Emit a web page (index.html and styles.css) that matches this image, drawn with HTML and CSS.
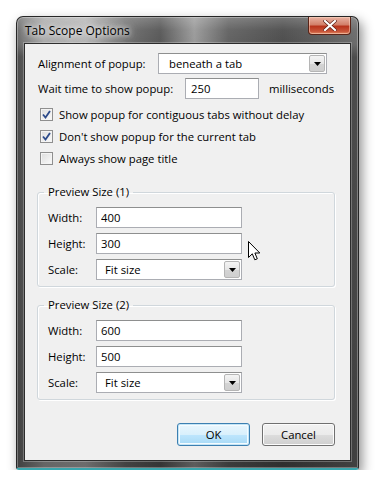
FILE: index.html
```html
<!DOCTYPE html>
<html>
<head>
    <title>Tab Scope Options</title>
    <meta charset="utf-8">
    <link rel="stylesheet" href="styles.css">
</head>
<body>
    <div class="window">
        <div class="titlebar">
            <span class="title">Tab Scope Options</span>
            <span class="close">
                <svg width="14" height="11" viewBox="0 0 14 11">
                    <path d="M2 1 L12 10 M12 1 L2 10" stroke="#5a1a10" stroke-width="3.4" stroke-linecap="square"></path>
                    <path d="M2 1 L12 10 M12 1 L2 10" stroke="#ffffff" stroke-width="2.2" stroke-linecap="square"></path>
                </svg>
            </span>
        </div>
        <div class="client">
            <div class="row">
                <label class="lbl lbl-align">Alignment of popup:</label>
                <div class="combo combo-wide">
                    <span class="combo-text">beneath a tab</span>
                    <span class="combo-btn"><svg width="7" height="4" viewBox="0 0 7 4"><path d="M0 0 H7 L3.5 4 Z" fill="#000"></path></svg></span>
                </div>
            </div>
            <div class="row">
                <label class="lbl lbl-wait">Wait time to show popup:</label>
                <input class="field field-ms" type="text" value="250" readonly>
                <span class="unit">milliseconds</span>
            </div>
            <div class="check"><span class="box"><svg width="9" height="9" viewBox="0 0 9 9"><path d="M1 4.5 L3.5 7.5 L8 1" fill="none" stroke="#2c4a8a" stroke-width="1.8"></path></svg></span>Show popup for contiguous tabs without delay</div>
            <div class="check"><span class="box"><svg width="9" height="9" viewBox="0 0 9 9"><path d="M1 4.5 L3.5 7.5 L8 1" fill="none" stroke="#2c4a8a" stroke-width="1.8"></path></svg></span>Don't show popup for the current tab</div>
            <div class="check"><span class="box"></span>Always show page title</div>

            <fieldset class="group">
                <legend>Preview Size (1)</legend>
                <div class="grow"><label class="glbl">Width:</label><input class="field" type="text" value="400" readonly></div>
                <div class="grow"><label class="glbl">Height:</label><input class="field" type="text" value="300" readonly></div>
                <div class="grow"><label class="glbl">Scale:</label>
                    <div class="combo combo-small">
                        <span class="combo-text">Fit size</span>
                        <span class="combo-btn"><svg width="7" height="4" viewBox="0 0 7 4"><path d="M0 0 H7 L3.5 4 Z" fill="#000"></path></svg></span>
                    </div>
                </div>
            </fieldset>

            <fieldset class="group group2">
                <legend>Preview Size (2)</legend>
                <div class="grow"><label class="glbl">Width:</label><input class="field" type="text" value="600" readonly></div>
                <div class="grow"><label class="glbl">Height:</label><input class="field" type="text" value="500" readonly></div>
                <div class="grow"><label class="glbl">Scale:</label>
                    <div class="combo combo-small">
                        <span class="combo-text">Fit size</span>
                        <span class="combo-btn"><svg width="7" height="4" viewBox="0 0 7 4"><path d="M0 0 H7 L3.5 4 Z" fill="#000"></path></svg></span>
                    </div>
                </div>
            </fieldset>

            <div class="buttons">
                <button class="btn btn-default">OK</button>
                <button class="btn">Cancel</button>
            </div>
        </div>
    </div>

    <svg class="cursor" width="13" height="21" viewBox="0 0 13 21">
        <path d="M0.5 0.5 L0.5 16.5 L4.3 12.8 L6.8 18.8 L9.3 17.8 L6.9 12 L11.8 12 Z" fill="#fff" stroke="#000" stroke-width="1" stroke-linejoin="miter"></path>
    </svg>
</body>
</html>
```

FILE: styles.css
```css
*{
    box-sizing: border-box;
}
body{
    margin:0;
    padding:16px 0 0 16px;
    background-color: #ffffff;
    font-family: "Open Sans", "Noto Sans", sans-serif;
    font-size: 11.3px;
    color: #000;
}
.window{
    width:343px;
    height:454px;
    padding:0 7px 8px 7px;
    border-radius: 7px 7px 3px 3px;
    border:1px solid #262626;
    border-bottom:2px solid #38a6ae;
    background: linear-gradient(180deg, rgba(255,255,255,0.22) 0, rgba(255,255,255,0.04) 13px, rgba(0,0,0,0) 27px, rgba(0,0,0,0.28) 40px, rgba(0,0,0,0.4) 100%),
                linear-gradient(90deg, #6a6a6a 0, #a8a8a8 8%, #b4b4b4 20%, #6e6e6e 32%, #585858 42%, #9a9a9a 52%, #626262 62%, #4e4e4e 78%, #6c6c6c 100%);
    box-shadow: 3px 5px 12px rgba(0,0,0,0.45), inset 0 0 0 1px rgba(255,255,255,0.3);
}
.titlebar{
    height:26px;
    display:flex;
    align-items: flex-start;
    justify-content: space-between;
}
.title{
    padding:5px 0 0 1px;
    font-size: 12px;
    color:#000;
    white-space: nowrap;
    text-shadow: 0 0 5px #fff, 0 0 9px #e6e6e6, 0 0 14px #d4d4d4;
}
.close{
    width:43px;
    height:18px;
    border:1px solid #5a2418;
    border-top:none;
    border-radius: 0 0 4px 4px;
    display:flex;
    align-items:center;
    justify-content:center;
    background: linear-gradient(180deg, #e9b3a3 0, #d2806a 45%, #b8341c 55%, #c9563a 85%, #e08a64 100%);
    box-shadow: inset 0 0 0 1px rgba(255,220,200,0.5);
}
.client{
    height:418px;
    background-color: #f0f0f0;
    border:1px solid #2c2c2c;
    box-shadow: 0 0 0 1px rgba(255,255,255,0.25);
    padding:9px 15px 0 12px;
}
.row{
    height:21px;
    display:flex;
    align-items:center;
    margin-bottom:4px;
    padding-left:1px;
    white-space: nowrap;
}
.lbl{
    flex-shrink:0;
}
.lbl-align{
    width:120px;
}
.lbl-wait{
    width:147px;
}
.unit{
    margin-left:10px;
}
.field{
    height:21px;
    width:146px;
    flex-shrink:0;
    border:1px solid #abadb3;
    border-top-color:#8e8f8f;
    background:#fff;
    font-family: inherit;
    font-size:11.3px;
    padding:0 4px;
    color:#000;
    outline:none;
}
.field-ms{
    width:74px;
    padding-left:5px;
}
.combo{
    height:21px;
    flex-shrink:0;
    border:1px solid #abadb3;
    border-top-color:#8e8f8f;
    background:#fff;
    display:flex;
    align-items:center;
    justify-content:space-between;
    padding:1px;
}
.combo-wide{
    width:169px;
}
.combo-wide .combo-text{
    padding-left:9px;
}
.combo-small{
    width:146px;
}
.combo-small .combo-text{
    padding-left:7px;
}
.combo-btn{
    width:16px;
    height:17px;
    border:1px solid #b5b5b5;
    border-radius:2px;
    background: linear-gradient(180deg, #f4f4f4 0, #e6e6e6 50%, #d4d4d4 51%, #cfcfcf 100%);
    display:flex;
    align-items:center;
    justify-content:center;
}
.check{
    height:22px;
    display:flex;
    align-items:center;
    padding-left:3px;
    white-space: nowrap;
}
.box{
    width:13px;
    height:13px;
    margin-right:6px;
    border:1px solid #8f8f8f;
    background: linear-gradient(135deg, #dcdcdc 0, #fbfbfb 100%);
    box-shadow: inset 0 0 0 1px #f4f4f4;
    display:flex;
    align-items:center;
    justify-content:center;
}
.group{
    margin:15px 0 0 0;
    width:298px;
    border:1px solid #d0d7dc;
    border-radius:3px;
    padding:7px 10px 6px 10px;
    box-shadow: inset 1px 1px 0 #fff, 1px 1px 0 #fff;
}
.group2{
    margin-top:10px;
}
.group legend{
    padding:0 4px;
    margin-left:-4px;
    line-height:16px;
}
.grow{
    display:flex;
    align-items:center;
    height:21px;
    margin-bottom:5px;
}
.grow:last-child{
    margin-bottom:0;
}
.glbl{
    width:48px;
    flex-shrink:0;
}
.buttons{
    display:flex;
    justify-content:flex-end;
    gap:12px;
    width:298px;
    margin-top:23px;
}
.btn{
    width:73px;
    height:23px;
    border:1px solid #707070;
    border-radius:3px;
    font-family: inherit;
    font-size:11.3px;
    color:#000;
    background: linear-gradient(180deg, #f2f2f2 0, #ebebeb 50%, #dddddd 51%, #cfcfcf 100%);
    box-shadow: inset 0 0 0 1px #fcfcfc;
    padding:0;
}
.btn-default{
    border-color:#3c7fb1;
    background: linear-gradient(180deg, #eaf6fd 0, #d9f0fc 50%, #bee6fd 51%, #a7d9f5 100%);
    box-shadow: inset 0 0 0 1px #c4e5f6, inset 0 0 0 2px #f4fbff;
}
.cursor{
    position:absolute;
    left:248px;
    top:241px;
}
```
